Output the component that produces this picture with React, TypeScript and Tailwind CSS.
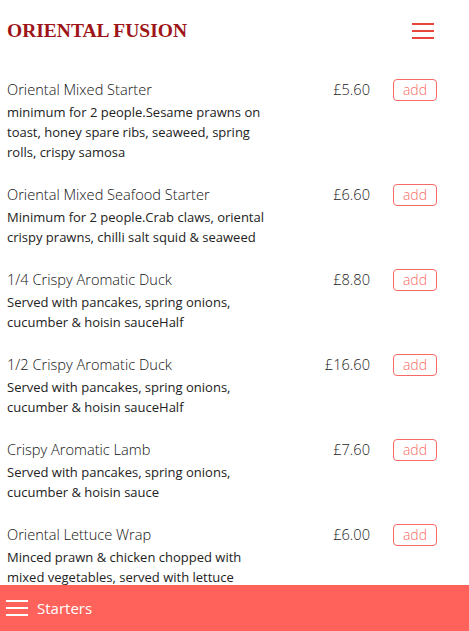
const items = [
  {
    name: 'Oriental Mixed Starter',
    desc: 'minimum for 2 people.Sesame prawns on toast, honey spare ribs, seaweed, spring rolls, crispy samosa',
    price: '£5.60',
  },
  {
    name: 'Oriental Mixed Seafood Starter',
    desc: 'Minimum for 2 people.Crab claws, oriental crispy prawns, chilli salt squid & seaweed',
    price: '£6.60',
  },
  {
    name: '1/4 Crispy Aromatic Duck',
    desc: 'Served with pancakes, spring onions, cucumber & hoisin sauceHalf',
    price: '£8.80',
  },
  {
    name: '1/2 Crispy Aromatic Duck',
    desc: 'Served with pancakes, spring onions, cucumber & hoisin sauceHalf',
    price: '£16.60',
  },
  {
    name: 'Crispy Aromatic Lamb',
    desc: 'Served with pancakes, spring onions, cucumber & hoisin sauce',
    price: '£7.60',
  },
  {
    name: 'Oriental Lettuce Wrap',
    desc: 'Minced prawn & chicken chopped with mixed vegetables, served with lettuce',
    price: '£6.00',
  },
]

function Burger({ color }: { color: string }) {
  return (
    <div className="flex flex-col gap-[5px] w-[22px]">
      <span className={`block h-[2px] w-full ${color}`} />
      <span className={`block h-[2px] w-full ${color}`} />
      <span className={`block h-[2px] w-full ${color}`} />
    </div>
  )
}

export default function App() {
  return (
    <div className="min-h-screen bg-white font-['Open_Sans',sans-serif] text-[#222]">
      {/* Header */}
      <header className="h-[62px] flex items-center justify-between pl-[7px] pr-[35px]">
        <h1 className="font-['Liberation_Serif',serif] font-bold text-[19.5px] text-[#9e1519]">
          ORIENTAL FUSION
        </h1>
        <Burger color="bg-[#e8453c]" />
      </header>

      {/* Menu list */}
      <div className="pt-[16px] pb-[50px] pl-[7px] pr-[32px] flex flex-col gap-[21px]">
        {items.map((item) => (
          <div key={item.name} className="flex items-start">
            <div className="w-[262px]">
              <div className="text-[14.6px] font-light leading-[22px] text-[#111]">
                {item.name}
              </div>
              <p className="mt-[2px] text-[13px] leading-[20px] text-[#222]">
                {item.desc}
              </p>
            </div>
            <div className="flex-1 text-right text-[14.6px] font-light leading-[22px] text-[#222]">
              {item.price}
            </div>
            <button className="ml-[23px] mt-[1px] w-[44px] h-[22px] rounded-[4px] border border-[#f86a66] text-[#f86a66] text-[14px] font-light leading-none flex items-center justify-center">
              add
            </button>
          </div>
        ))}
      </div>

      {/* Bottom bar */}
      <div className="fixed bottom-0 left-0 right-0 h-[46px] bg-[#ff625b] flex items-center gap-[9px] pl-[6px]">
        <Burger color="bg-white" />
        <span className="text-white text-[15px]">Starters</span>
      </div>
    </div>
  )
}
